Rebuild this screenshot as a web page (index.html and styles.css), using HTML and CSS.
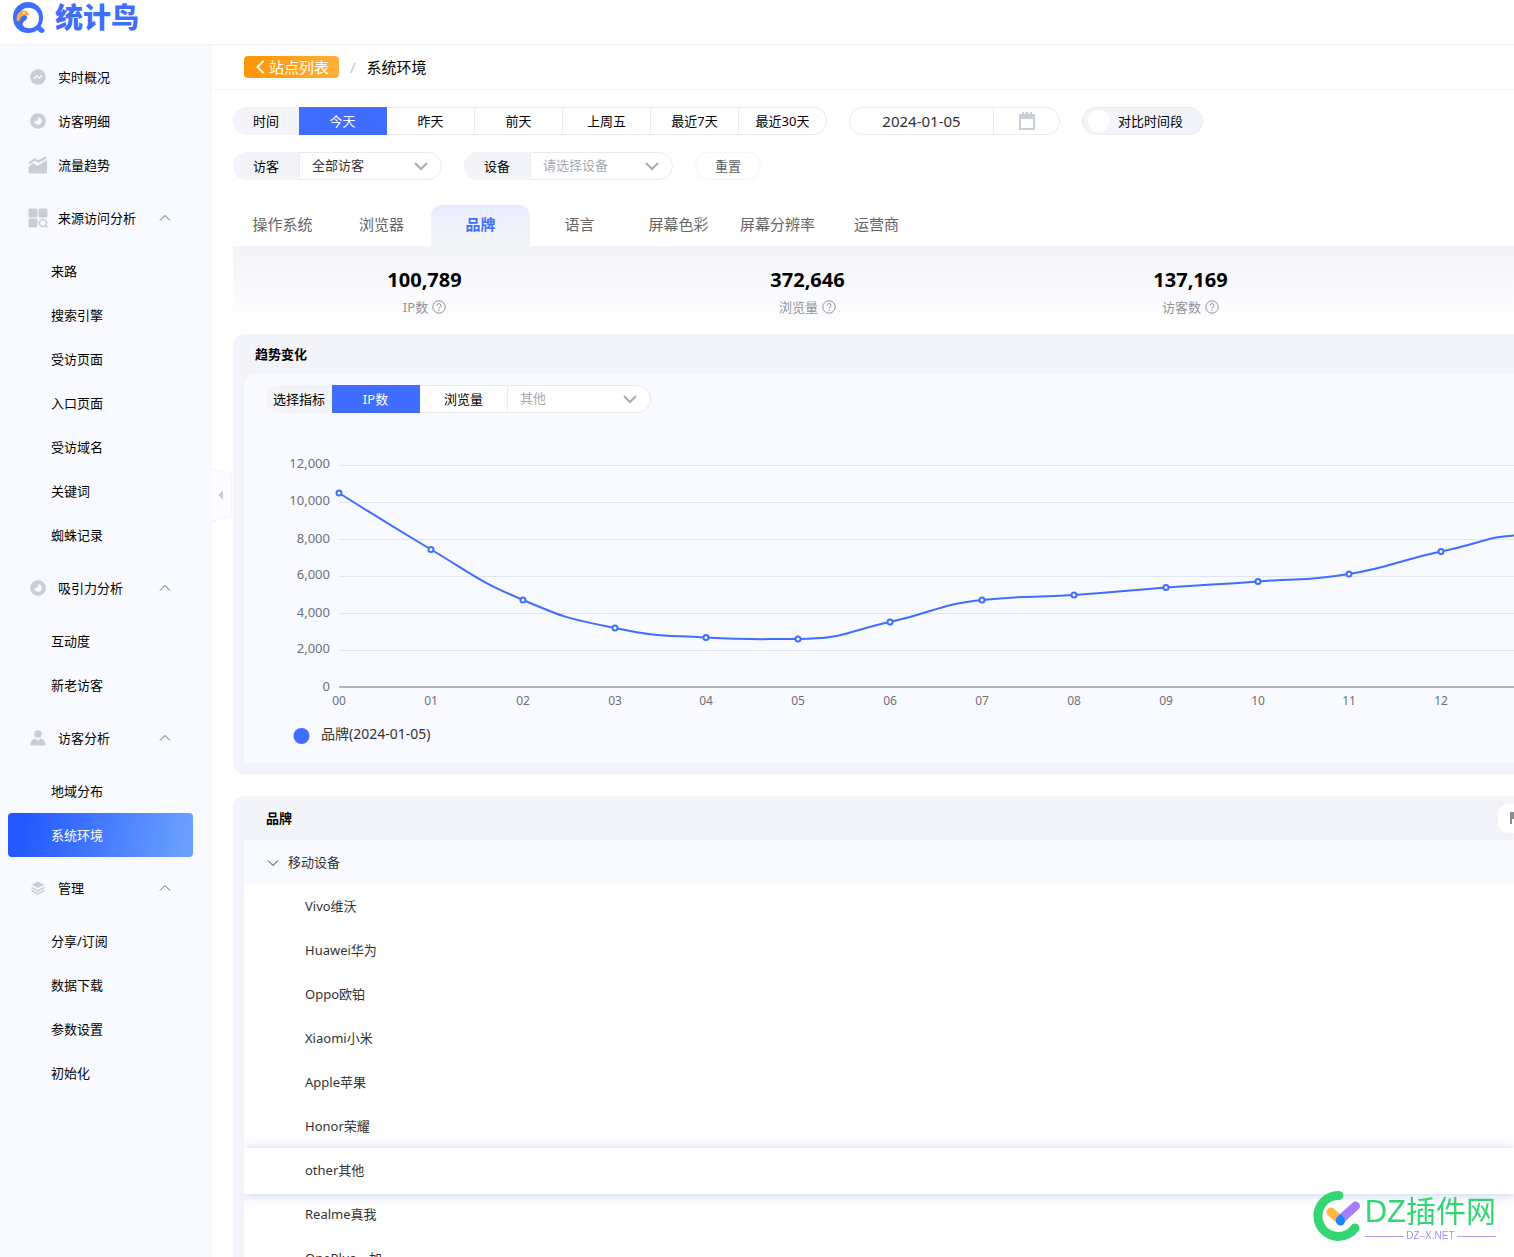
FILE: index.html
```html
<!DOCTYPE html>
<html lang="zh-CN">
<head>
<meta charset="utf-8">
<title>统计鸟</title>
<link rel="stylesheet" href="styles.css">
</head>
<body>
<svg class="defs" width="0" height="0" aria-hidden="true">
  <symbol id="up" viewBox="0 0 12 8"><path d="M1 6.500 6 1.500l5 5" fill="none" stroke="currentColor"/></symbol>
  <symbol id="down" viewBox="0 0 16 10"><path d="M2 2l6 6 6-6" fill="none" stroke="#a8abb2" stroke-width="2"/></symbol>
  <symbol id="eye" viewBox="0 0 16 16"><circle cx="8" cy="8" r="7.800" fill="#c9cdd6"/><path d="M8 4.200a3.800 3.800 0 1 1-3.700 3.200c.8.9 2.200.8 2.900 0 .8-.9.8-2.200.8-3.200z" fill="#f9faff"/></symbol>
  <symbol id="help" viewBox="0 0 14 14"><circle cx="7" cy="7" r="6.200" fill="none" stroke="#909399"/><path d="M5 5.600a2 2 0 1 1 2.600 1.900Q7 7.800 7 8.700" fill="none" stroke="#909399"/><circle cx="7" cy="10.400" r=".7" fill="#909399"/></symbol>
</svg>
<header class="topbar">
  <a class="brand" href="#">
    <svg width="34" height="34" viewBox="0 0 34 34" aria-hidden="true">
      <path d="M16 2C8 2 1 8 1 17.500S8 33 16 33c4 0 7-1.200 9.500-3l2.500 2.600c2 1.400 5-.6 4.800-2.600L28.600 26c1.500-2.300 2.400-5 2.400-8.500C31 8 24 2 16 2z" fill="#3f6dff"/>
      <path d="M9 11c5-6 18-4 18 7 0 8-6 11-11 10-5-.5-7-4-4-6.500 3-2 4-4 2-6.500z" fill="#fff"/>
      <path d="M5 21c-1.500-5 2-11 7-10.500 3 0 4 2 5.500 5-2-.5-5-.5-7 .5-2 1-2.500 4-3.500 5z" fill="#ffab3d"/><circle cx="12" cy="13" r="1" fill="#fff"/>
    </svg>
    <span>统计鸟</span>
  </a>
</header>
<div class="layout">
  <nav class="sidebar">
    <a class="item" href="#"><svg class="ico" viewBox="0 0 16 16"><circle cx="8" cy="8" r="7.800" fill="#c9cdd6"/><path d="M4 9.500 6.800 7l2.400 2L12 6.500" fill="none" stroke="#fff" stroke-width="1.200"/></svg>实时概况</a>
    <a class="item" href="#"><svg class="ico"><use href="#eye"/></svg>访客明细</a>
    <a class="item" href="#"><svg class="ico wide" viewBox="0 0 20 18"><path d="M.5 17.500V11l5-4 4 3 9.500-6v13.500zM.5 6.500 7 2l3 2.500L16 1l3-.5-1 2.500-8 4L7 4.500l-6 4z" fill="#c9cdd6"/></svg>流量趋势</a>
    <button class="item group" type="button"><svg class="ico wide" viewBox="0 0 20 20"><g fill="#c9cdd6"><rect x=".5" y=".5" width="9" height="9" rx="1.500"/><rect x="10.500" y=".5" width="9" height="9" rx="1.500"/><rect x=".5" y="10.500" width="9" height="9" rx="1.500"/></g><circle cx="15" cy="15" r="3.500" fill="none" stroke="#c9cdd6" stroke-width="1.500"/><path d="M17 17l2.500 2.500" stroke="#c9cdd6" stroke-width="1.500"/></svg>来源访问分析<svg class="caret"><use href="#up"/></svg></button>
    <a class="item sub" href="#">来路</a>
    <a class="item sub" href="#">搜索引擎</a>
    <a class="item sub" href="#">受访页面</a>
    <a class="item sub" href="#">入口页面</a>
    <a class="item sub" href="#">受访域名</a>
    <a class="item sub" href="#">关键词</a>
    <a class="item sub" href="#">蜘蛛记录</a>
    <button class="item group" type="button"><svg class="ico"><use href="#eye"/></svg>吸引力分析<svg class="caret"><use href="#up"/></svg></button>
    <a class="item sub" href="#">互动度</a>
    <a class="item sub" href="#">新老访客</a>
    <button class="item group" type="button"><svg class="ico" viewBox="0 0 16 16"><circle cx="8" cy="4" r="3.800" fill="#c9cdd6"/><path d="M.3 15.500c0-4 2-6.500 5.200-7L8 11l2.500-2.500c3.200.5 5.200 3 5.200 7z" fill="#c9cdd6"/></svg>访客分析<svg class="caret"><use href="#up"/></svg></button>
    <a class="item sub" href="#">地域分布</a>
    <a class="item sub active" href="#">系统环境</a>
    <button class="item group" type="button"><svg class="ico" viewBox="0 0 16 16"><path d="M8 1.500l6.500 3.300L8 8 1.500 4.800z" fill="#c9cdd6"/><path d="M1.500 7.500 8 10.800l6.500-3.300M1.500 10.500 8 13.800l6.500-3.300" fill="none" stroke="#c9cdd6" stroke-width="1.500"/></svg>管理<svg class="caret"><use href="#up"/></svg></button>
    <a class="item sub" href="#">分享/订阅</a>
    <a class="item sub" href="#">数据下载</a>
    <a class="item sub" href="#">参数设置</a>
    <a class="item sub" href="#">初始化</a>
  </nav>
  <button class="collapse" type="button" aria-label="收起"><svg width="22" height="54" viewBox="0 0 22 54"><path d="M0 .5 21.500 5v44L0 53.500z" fill="#fcfcfe" stroke="#f3f4f8"/><path d="M13 22.500v9L8 27z" fill="#c9cdd6"/></svg></button>
  <main class="main">
    <div class="crumbs">
      <a class="back" href="#"><svg width="10" height="14" viewBox="0 0 10 14"><path d="M8.500 1 2.500 7l6 6" fill="none" stroke="#fff" stroke-width="2"/></svg>站点列表</a>
      <span class="slash">/</span>
      <span>系统环境</span>
    </div>
    <div class="content">
      <div class="filters">
        <div class="joined">
          <span class="tag">时间</span>
          <button class="opt on" type="button">今天</button><button class="opt" type="button">昨天</button><button class="opt" type="button">前天</button><button class="opt" type="button">上周五</button><button class="opt" type="button">最近7天</button><button class="opt" type="button">最近30天</button>
        </div>
        <div class="joined date">
          <input type="text" value="2024-01-05" aria-label="日期">
          <button type="button" aria-label="选择日期"><svg width="16" height="18" viewBox="0 0 16 18"><path d="M0 2h3V0h2v2h1.500V0h3v2H11V0h2v2h3v16H0zM2 7v9h12V7z" fill="#c9cdd6" fill-rule="evenodd"/></svg></button>
        </div>
        <label class="switch"><input type="checkbox">对比时间段</label>
      </div>
      <div class="filters">
        <div class="joined">
          <label class="tag" for="visitor">访客</label>
          <span class="pick"><select id="visitor"><option>全部访客</option></select><svg><use href="#down"/></svg></span>
        </div>
        <div class="joined">
          <label class="tag" for="device">设备</label>
          <span class="pick"><select id="device" class="empty"><option>请选择设备</option></select><svg><use href="#down"/></svg></span>
        </div>
        <button class="reset" type="button">重置</button>
      </div>
      <div class="tabs">
        <button type="button">操作系统</button><button type="button">浏览器</button><button class="on" type="button">品牌</button><button type="button">语言</button><button type="button">屏幕色彩</button><button type="button">屏幕分辨率</button><button type="button">运营商</button>
      </div>
      <div class="stats">
        <div><strong>100,789</strong><span>IP数 <svg><use href="#help"/></svg></span></div>
        <div><strong>372,646</strong><span>浏览量 <svg><use href="#help"/></svg></span></div>
        <div><strong>137,169</strong><span>访客数 <svg><use href="#help"/></svg></span></div>
      </div>
      <section class="panel trend">
        <h2>趋势变化</h2>
        <div class="card">
          <div class="joined">
            <label class="tag" for="metric">选择指标</label>
            <button class="opt on" type="button">IP数</button><button class="opt" type="button">浏览量</button>
            <span class="pick"><select id="metric" class="empty"><option>其他</option></select><svg><use href="#down"/></svg></span>
          </div>
          <svg class="chart" role="img" aria-label="品牌(2024-01-05)">
            <g stroke="#e0e6f1" shape-rendering="crispEdges">
              <line x1="95" x2="100%" y1="30" y2="30"/><line x1="95" x2="100%" y1="67" y2="67"/><line x1="95" x2="100%" y1="104" y2="104"/><line x1="95" x2="100%" y1="141" y2="141"/><line x1="95" x2="100%" y1="178" y2="178"/><line x1="95" x2="100%" y1="215" y2="215"/>
            </g>
            <line x1="95" x2="100%" y1="252" y2="252" stroke="#6e7079"/>
            <g class="ylab"><text x="86" y="33">12,000</text><text x="86" y="70">10,000</text><text x="86" y="108">8,000</text><text x="86" y="144">6,000</text><text x="86" y="182">4,000</text><text x="86" y="218">2,000</text><text x="86" y="256">0</text></g>
            <g class="xlab"><text x="95" y="270">00</text><text x="187" y="270">01</text><text x="279" y="270">02</text><text x="371" y="270">03</text><text x="462" y="270">04</text><text x="554" y="270">05</text><text x="646" y="270">06</text><text x="738" y="270">07</text><text x="830" y="270">08</text><text x="922" y="270">09</text><text x="1014" y="270">10</text><text x="1105" y="270">11</text><text x="1197" y="270">12</text></g>
            <path d="M95 58C95 58 141 87 187 114.500S233 145.400 279 165S325 183.600 371 193S416 200 462 202.500S508 204 554 204S600 197 646 187S692 170 738 165S784 163 830 160S876 156 922 152.500S968 150 1014 146.500S1059 146.500 1105 139S1151 126 1197 116.500S1243 100 1289 100" fill="none" stroke="#3f6dff" stroke-width="2"/>
            <g fill="#fff" stroke="#3f6dff" stroke-width="2"><circle cx="95" cy="58" r="2.500"/><circle cx="187" cy="114.500" r="2.500"/><circle cx="279" cy="165" r="2.500"/><circle cx="371" cy="193" r="2.500"/><circle cx="462" cy="202.500" r="2.500"/><circle cx="554" cy="204" r="2.500"/><circle cx="646" cy="187" r="2.500"/><circle cx="738" cy="165" r="2.500"/><circle cx="830" cy="160" r="2.500"/><circle cx="922" cy="152.500" r="2.500"/><circle cx="1014" cy="146.500" r="2.500"/><circle cx="1105" cy="139" r="2.500"/><circle cx="1197" cy="116.500" r="2.500"/></g>
            <circle cx="57.500" cy="301" r="8" fill="#3f6dff"/>
            <text class="legend" x="77" y="304">品牌(2024-01-05)</text>
          </svg>
        </div>
      </section>
      <section class="panel list">
        <div class="head"><h2>品牌</h2><button class="tool" type="button" aria-label="筛选"><svg width="4" height="12" viewBox="0 0 4 12"><path d="M0 0h4v7H2v5H0z" fill="#8b8d93"/></svg></button></div>
        <table>
          <thead><tr><th scope="rowgroup"><svg><use href="#up"/></svg>移动设备</th></tr></thead>
          <tbody>
            <tr><td>Vivo维沃</td></tr>
            <tr><td>Huawei华为</td></tr>
            <tr><td>Oppo欧铂</td></tr>
            <tr><td>Xiaomi小米</td></tr>
            <tr><td>Apple苹果</td></tr>
            <tr><td>Honor荣耀</td></tr>
            <tr class="hover"><td>other其他</td></tr>
            <tr><td>Realme真我</td></tr>
            <tr><td>OnePlus一加</td></tr>
          </tbody>
        </table>
      </section>
    </div>
  </main>
</div>
<div class="mark">
  <svg width="48" height="52" viewBox="0 0 48 52" aria-hidden="true"><path d="M26 5.500A20.500 20.500 0 1 0 42 38" fill="none" stroke="#34d673" stroke-width="9" stroke-linecap="round"/><path d="M18 22l9 8" stroke="#ffb73d" stroke-width="9" stroke-linecap="round"/><path d="M27 30 42.500 16" stroke="#a67dff" stroke-width="9" stroke-linecap="round"/><path d="M27.500 24c3 3 4.500 4.500 4.500 7a4.500 4.500 0 0 1-9 0c0-2.500 1.500-4 4.500-7z" fill="#1b86ff"/></svg>
  <div><b>DZ<i>插件网</i></b><small>DZ–X.NET</small></div>
</div>
</body>
</html>
```
FILE: styles.css
```css
* { box-sizing: border-box; }
body {
  margin: 0;
  height: 100vh;
  overflow: hidden;
  display: flex;
  flex-direction: column;
  background: #fff;
  color: #000;
  font: 13px/20px "Noto Sans", "Noto Sans CJK SC", sans-serif;
}
button, input, select { font: inherit; color: inherit; margin: 0; padding: 0; border: 0; background: none; }
a { color: inherit; text-decoration: none; }
.defs { position: absolute; }

.topbar { flex: none; height: 45px; border-bottom: 1px solid #f3f4f8; padding-left: 12px; }
.brand { display: inline-flex; gap: 9px; color: #3f6dff; font-size: 28px; line-height: 32px; font-weight: 900; font-family: "Noto Sans CJK SC", sans-serif; }

.layout { flex: 1; min-height: 0; display: flex; position: relative; }
.sidebar { flex: none; width: 211px; padding-top: 10px; background: #f9faff; border-right: 1px solid #f3f4f8; }
.item { display: flex; align-items: center; width: 185px; height: 44px; margin-left: 8px; padding-left: 20px; border-radius: 4px; text-align: left; }
.group { height: 62px; }
.sub { padding-left: 43px; }
.ico { width: 16px; height: 16px; margin: 0 12px 0 2px; flex: none; }
.wide { width: 20px; height: 20px; margin: 0 10px 0 0; }
.caret { width: 12px; height: 8px; margin: 0 22px 0 auto; color: #606266; }
.active { color: #fff; background: linear-gradient(100deg, #2459ff 10%, #6a9fff 95%); }
.collapse { position: absolute; left: 210px; top: 423px; width: 22px; height: 54px; }
.collapse svg { display: block; }

.main { flex: 1; min-width: 0; }
.crumbs { display: flex; align-items: center; gap: 11px; height: 45px; padding-left: 33px; border-bottom: 1px solid #f3f4f8; font-size: 15px; }
.back { display: flex; align-items: center; gap: 4px; height: 22px; padding: 0 10px 0 11px; border-radius: 4px; color: #fff; background: linear-gradient(100deg, #ff9500, #ffb03d); }
.slash { color: #c0c4cc; }
.content { padding: 17px 0 0 22px; }

.filters { display: flex; gap: 22px; margin-bottom: 17px; }
.joined { display: flex; height: 28px; }
.tag { width: 66px; line-height: 28px; text-align: center; border-radius: 14px 0 0 14px; background: #f3f4f9; }
.opt { width: 88px; border: 1px solid #e9eaee; border-left: 0; background: #fff; }
.opt.on { background: #3f6dff; border-color: #3f6dff; color: #fff; }
.opt:last-child { border-radius: 0 14px 14px 0; }
.date { width: 211px; border: 1px solid #e9eaee; border-radius: 14px; }
.date input { width: 144px; text-align: center; font-size: 15px; color: #303133; border-right: 1px solid #e9eaee; }
.date button { flex: 1; display: flex; align-items: center; justify-content: center; }
.switch { display: flex; align-items: center; gap: 8px; width: 121px; height: 28px; padding-left: 5px; border: 1px solid #e9eaee; border-radius: 14px; background: #f3f4f9; }
.switch input { appearance: none; width: 22px; height: 22px; border-radius: 50%; background: #fff; }
.pick { display: flex; align-items: center; width: 143px; border: 1px solid #e9eaee; border-radius: 0 14px 14px 0; background: #fff; padding: 0 12px; }
.opt + .pick { border-left: 0; }
.pick select { appearance: none; flex: 1; height: 26px; padding-bottom: 2px; color: #303133; }
.pick .empty { color: #a8abb2; }
.pick svg { width: 16px; height: 10px; flex: none; }
.reset { width: 66px; border: 1px solid #f3f4f8; border-radius: 14px; color: #606266; }

.tabs { display: flex; padding-top: 8px; }
.tabs button { width: 99px; height: 41px; padding-bottom: 4px; color: #666; font-size: 15px; border-radius: 11px 11px 0 0; }
.tabs .on { color: #3f6dff; font-weight: 700; background: linear-gradient(#e6ebff, #f3f4f9 70%); }

.stats { display: flex; height: 88px; padding-top: 22px; background: linear-gradient(#f3f4f9, #fff); }
.stats div { flex: 0 0 383px; text-align: center; }
.stats strong { display: block; font-size: 20px; line-height: 24px; }
.stats span { display: flex; align-items: center; justify-content: center; gap: 4px; height: 30px; color: #909399; }
.stats svg { width: 14px; height: 14px; }

.panel { padding-left: 11px; border-radius: 11px 0 0 11px; background: #f3f4f9; }
.panel h2 { margin: 0; font-size: 13px; line-height: 20px; font-weight: 700; }
.trend { padding-bottom: 11px; margin-bottom: 22px; }
.trend h2 { padding: 10px 11px; }
.card { padding: 11px 0 0 22px; border-radius: 11px 0 0 0; background: #f9faff; }
.chart { display: block; width: calc(100% + 22px); height: 328px; margin: 22px 0 0 -22px; }
.ylab { font-size: 13px; text-anchor: end; fill: #6e7079; }
.xlab { font-size: 12px; text-anchor: middle; fill: #6e7079; }
.legend { font-size: 14px; fill: #333; }

.head { display: flex; align-items: center; justify-content: space-between; height: 44px; padding-left: 22px; }
.tool { width: 16px; height: 29px; border-radius: 10px 0 0 10px; background: #fff; display: flex; align-items: center; justify-content: flex-end; }
.list { overflow: hidden; }
table { width: 100%; border-collapse: separate; border-spacing: 0; background: #fff; overflow: clip; }
th, td { height: 44px; padding: 0; text-align: left; font-weight: 400; color: #333; }
th { padding-left: 23px; background: #f9faff; }
th svg { width: 12px; height: 8px; margin-right: 9px; transform: rotate(180deg); }
td { padding-left: 61px; }
.hover td { position: relative; background: #fff; box-shadow: 0 2px 0 #fff, 0 2px 11px 1px #c9d2ee; }

.mark { position: fixed; right: 18px; bottom: 15px; display: flex; gap: 4px; }
.mark b { display: block; font: 300 31px/38px "Liberation Sans", sans-serif; color: #34d673; white-space: nowrap; }
.mark i { font: 400 30px/38px "Noto Sans CJK SC", sans-serif; }
.mark small { display: flex; align-items: center; gap: 2px; font: 10px/10px "Liberation Sans", sans-serif; color: #a98cf5; }
.mark small::before, .mark small::after { content: ""; flex: 1; height: 1px; background: #b9a0fa; }
```
